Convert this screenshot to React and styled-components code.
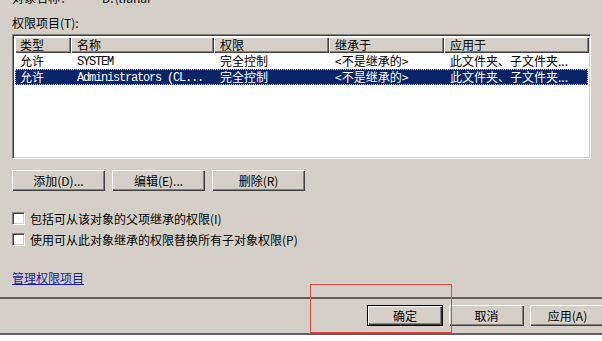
import React from "react";
import styled, { createGlobalStyle } from "styled-components";

const Global = createGlobalStyle`
  html, body { margin: 0; padding: 0; background: #d4d0c8; }
  body { font-family: "Noto Sans CJK SC", "Liberation Sans", sans-serif; font-size: 12px; color: #000; }
`;

const Page = styled.div`
  position: relative;
  width: 602px;
  height: 341px;
  overflow: hidden;
  background: #d4d0c8;
  display: flex;
  flex-direction: column;
`;

const TopLine = styled.div`
  margin-top: -8px;
  height: 12px;
  line-height: 12px;
  padding-left: 12px;
  display: flex;
  gap: 30px;
  white-space: nowrap;
`;

const Label = styled.div`
  margin-top: 13px;
  height: 12px;
  line-height: 12px;
  padding-left: 12px;
  white-space: nowrap;
`;

const ListBox = styled.div`
  margin: 5px 0 0 12px;
  width: 579px;
  height: 125px;
  box-sizing: border-box;
  background: #fff;
  border-top: 1px solid #808080;
  border-left: 1px solid #808080;
  border-right: 1px solid #fff;
  border-bottom: 1px solid #fff;
  box-shadow: inset 1px 1px 0 #404040, inset -1px -1px 0 #d4d0c8;
  padding: 2px;
  overflow: hidden;
`;

const cols = "56px 143px 115px 115px 145px";

const HeaderRow = styled.div`
  display: grid;
  grid-template-columns: ${cols};
  height: 16px;
`;

const HeaderCell = styled.div`
  box-sizing: border-box;
  height: 16px;
  line-height: 15px;
  padding-left: ${(p) => (p.$first ? 5 : 6)}px;
  background: #d4d0c8;
  box-shadow: inset 1px 1px 0 #fff, inset -1px -1px 0 #404040, inset -2px -2px 0 #808080;
  white-space: nowrap;
  overflow: hidden;
`;

const Row = styled.div`
  display: grid;
  grid-template-columns: ${cols};
  height: 16px;
  box-sizing: border-box;
  background: ${(p) => (p.$selected ? "#0a246a" : "transparent")};
  color: ${(p) => (p.$selected ? "#fff" : "#000")};
  outline: ${(p) => (p.$selected ? "1px dotted #d8c890" : "none")};
  outline-offset: -1px;
`;

const Cell = styled.div`
  line-height: 16px;
  padding-left: ${(p) => (p.$first ? 5 : 6)}px;
  padding-top: ${(p) => (p.$mono ? 1 : 0)}px;
  box-sizing: border-box;
  white-space: nowrap;
  overflow: hidden;
  font-family: ${(p) => (p.$mono ? '"Liberation Mono", "DejaVu Sans Mono", monospace' : "inherit")};
  letter-spacing: ${(p) => (p.$mono ? "-1.2px" : "0")};
`;

const ButtonRow = styled.div`
  margin-top: 11px;
  padding-left: 12px;
  display: flex;
  gap: 7px;
`;

const Button = styled.div`
  width: ${(p) => p.$w || 75}px;
  height: 21px;
  box-sizing: border-box;
  flex: none;
  display: flex;
  align-items: center;
  justify-content: center;
  line-height: 12px;
  background: #d4d0c8;
  white-space: nowrap;
  box-shadow: ${(p) =>
    p.$default
      ? "inset 0 0 0 1px #000, inset 2px 2px 0 #fff, inset -2px -2px 0 #404040, inset -3px -3px 0 #808080"
      : "inset 1px 1px 0 #fff, inset -1px -1px 0 #404040, inset -2px -2px 0 #808080"};
`;

const CheckRow = styled.div`
  margin-top: ${(p) => p.$mt}px;
  padding-left: 12px;
  height: 13px;
  display: flex;
  align-items: center;
  gap: 5px;
  white-space: nowrap;
  line-height: 13px;
`;

const CheckBox = styled.span`
  width: 13px;
  height: 13px;
  box-sizing: border-box;
  flex: none;
  background: #fff;
  border-top: 1px solid #808080;
  border-left: 1px solid #808080;
  border-right: 1px solid #fff;
  border-bottom: 1px solid #fff;
  box-shadow: inset 1px 1px 0 #404040, inset -1px -1px 0 #d4d0c8;
`;

const LinkText = styled.a`
  margin: 25px 0 0 12px;
  align-self: flex-start;
  height: 14px;
  line-height: 14px;
  color: #1a1aa0;
  text-decoration: underline;
  text-underline-offset: 1px;
  white-space: nowrap;
`;

const Separator = styled.div`
  margin-top: ${(p) => p.$mt}px;
  height: 2px;
  flex: none;
  background: #606060;
`;

const Footer = styled.div`
  margin-top: 6px;
  margin-right: -3px;
  display: flex;
  justify-content: flex-end;
  gap: 6px;
`;

const WhiteStrip = styled.div`
  flex: 1;
  background: #fff;
`;

const Annotation = styled.div`
  position: absolute;
  left: 310px;
  top: 284px;
  width: 142px;
  height: 49px;
  box-sizing: border-box;
  border: 1px solid #f04444;
  pointer-events: none;
`;

const rows = [
  { type: "允许", name: "SYSTEM", perm: "完全控制", inh: "<不是继承的>", apply: "此文件夹、子文件夹..." },
  { type: "允许", name: "Administrators (CL...", perm: "完全控制", inh: "<不是继承的>", apply: "此文件夹、子文件夹...", selected: true },
];

export default function App() {
  return (
    <>
      <Global />
      <Page>
        <TopLine>
          <span>对象名称：</span>
          <span>D:\tianai</span>
        </TopLine>
        <Label>权限项目(T):</Label>
        <ListBox>
          <HeaderRow>
            <HeaderCell $first>类型</HeaderCell>
            <HeaderCell>名称</HeaderCell>
            <HeaderCell>权限</HeaderCell>
            <HeaderCell>继承于</HeaderCell>
            <HeaderCell>应用于</HeaderCell>
          </HeaderRow>
          {rows.map((r, i) => (
            <Row key={i} $selected={r.selected}>
              <Cell $first>{r.type}</Cell>
              <Cell $mono>{r.name}</Cell>
              <Cell>{r.perm}</Cell>
              <Cell>{r.inh}</Cell>
              <Cell>{r.apply}</Cell>
            </Row>
          ))}
        </ListBox>
        <ButtonRow>
          <Button $w={93}>添加(D)...</Button>
          <Button $w={93}>编辑(E)...</Button>
          <Button $w={93}>删除(R)</Button>
        </ButtonRow>
        <CheckRow $mt={21}>
          <CheckBox />
          <span>包括可从该对象的父项继承的权限(I)</span>
        </CheckRow>
        <CheckRow $mt={8}>
          <CheckBox />
          <span>使用可从此对象继承的权限替换所有子对象权限(P)</span>
        </CheckRow>
        <LinkText href="#">管理权限项目</LinkText>
        <Separator $mt={12} />
        <Footer>
          <Button $w={76} $default>确定</Button>
          <Button>取消</Button>
          <Button>应用(A)</Button>
        </Footer>
        <Separator $mt={7} />
        <WhiteStrip />
        <Annotation />
      </Page>
    </>
  );
}
